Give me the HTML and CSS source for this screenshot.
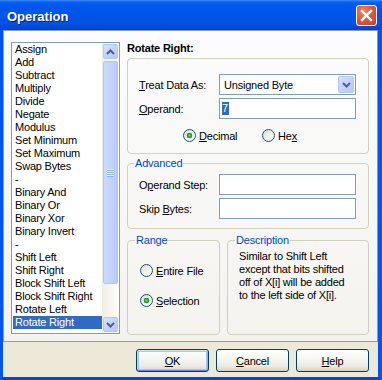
FILE: index.html
```html
<!DOCTYPE html>
<html>
<head>
<meta charset="utf-8">
<title>Operation</title>
<link rel="stylesheet" href="styles.css">
</head>
<body>
<div class="window">
  <div class="titlebar">
    <span class="title">Operation</span>
    <div class="close">
      <svg width="13" height="13" viewBox="0 0 13 13"><path d="M2 2 L11 11 M11 2 L2 11" stroke="#fff" stroke-width="2.4" stroke-linecap="square" fill="none"/></svg>
    </div>
  </div>
  <div class="frame">
    <div class="client">
      <div class="page">
        <div class="listbox">
          <ul class="items">
            <li>Assign</li>
            <li>Add</li>
            <li>Subtract</li>
            <li>Multiply</li>
            <li>Divide</li>
            <li>Negate</li>
            <li>Modulus</li>
            <li>Set Minimum</li>
            <li>Set Maximum</li>
            <li>Swap Bytes</li>
            <li>-</li>
            <li>Binary And</li>
            <li>Binary Or</li>
            <li>Binary Xor</li>
            <li>Binary Invert</li>
            <li>-</li>
            <li>Shift Left</li>
            <li>Shift Right</li>
            <li>Block Shift Left</li>
            <li>Block Shift Right</li>
            <li>Rotate Left</li>
            <li class="sel">Rotate Right</li>
          </ul>
          <div class="scrollbar">
            <div class="sb-btn"><div class="sb-face"><svg width="9" height="6" viewBox="0 0 9 6"><path d="M1 5 L4.5 1.5 L8 5" stroke="#4D6185" stroke-width="2" fill="none"/></svg></div></div>
            <div class="sb-track"><div class="thumb"><span class="grip"></span></div></div>
            <div class="sb-btn"><div class="sb-face"><svg width="9" height="6" viewBox="0 0 9 6"><path d="M1 1 L4.5 4.5 L8 1" stroke="#4D6185" stroke-width="2" fill="none"/></svg></div></div>
          </div>
        </div>
        <div class="right">
          <div class="heading">Rotate Right:</div>
          <div class="box">
            <div class="row">
              <span class="lbl"><u>T</u>reat Data As:</span>
              <div class="combo">
                <span class="combo-text">Unsigned Byte</span>
                <div class="combo-btn"><svg width="9" height="6" viewBox="0 0 9 6"><path d="M1 1 L4.5 4.5 L8 1" stroke="#4D6185" stroke-width="2" fill="none"/></svg></div>
              </div>
            </div>
            <div class="row">
              <span class="lbl"><u>O</u>perand:</span>
              <div class="field"><span class="hl">7</span></div>
            </div>
            <div class="radios">
              <div class="opt dec"><span class="radio on"></span><span><u>D</u>ecimal</span></div>
              <div class="opt"><span class="radio"></span><span>He<u>x</u></span></div>
            </div>
          </div>
          <fieldset class="group adv">
            <legend>Advanced</legend>
            <div class="row">
              <span class="lbl">O<u>p</u>erand Step:</span>
              <div class="field"></div>
            </div>
            <div class="row">
              <span class="lbl">Skip <u>B</u>ytes:</span>
              <div class="field"></div>
            </div>
          </fieldset>
          <div class="bottom-row">
            <fieldset class="group range">
              <legend>Range</legend>
              <div class="opt"><span class="radio"></span><span><u>E</u>ntire File</span></div>
              <div class="opt second"><span class="radio on"></span><span><u>S</u>election</span></div>
            </fieldset>
            <fieldset class="group desc">
              <legend>Description</legend>
              <p class="desc-text">Similar to Shift Left<br>except that bits shifted<br>off of X[i] will be added<br>to the left side of X[i].</p>
            </fieldset>
          </div>
        </div>
      </div>
      <div class="buttons">
        <div class="btn default"><span><u>O</u>K</span></div>
        <div class="btn"><span><u>C</u>ancel</span></div>
        <div class="btn"><span><u>H</u>elp</span></div>
      </div>
    </div>
  </div>
</div>
</body>
</html>
```
FILE: styles.css
```css
* { box-sizing: border-box; }
html, body { margin: 0; padding: 0; }
body {
  width: 382px;
  height: 380px;
  overflow: hidden;
  background: #0055EA;
  font-family: "Liberation Sans", Arial, sans-serif;
  font-size: 11px;
  letter-spacing: -0.2px;
  color: #000;
}
u { text-decoration: underline; text-underline-offset: 1px; }

.window {
  width: 382px;
  height: 380px;
  display: flex;
  flex-direction: column;
}

.titlebar {
  height: 30px;
  flex: none;
  display: flex;
  align-items: center;
  justify-content: space-between;
  padding: 0 5px 0 7px;
  background: linear-gradient(#3D8BF8 0, #0A61F1 2px, #0058EE 5px, #0055E8 15px, #0052E2 24px, #0048D8 28px, #003FCC 30px);
}
.title {
  color: #fff;
  font: bold 13px "Liberation Sans", Arial, sans-serif;
  line-height: 15px;
  margin-top: 3px;
  letter-spacing: 0;
  text-shadow: 1px 1px 0 #0A1E8C;
}
.close {
  width: 21px;
  height: 21px;
  border: 1px solid #fff;
  border-radius: 3px;
  background: radial-gradient(circle at 35% 30%, #F08868 0, #E2583A 45%, #C8401F 100%);
  display: flex;
  align-items: center;
  justify-content: center;
}

.frame {
  flex: 1;
  display: flex;
  border-style: solid;
  border-color: #0055EA;
  border-width: 0 4px 3px 3px;
  border-bottom-color: #0046D8;
}
.client {
  flex: 1;
  display: flex;
  flex-direction: column;
  background: #ECE9D8;
}

.page {
  height: 312px;
  flex: none;
  border: 1px solid #919B9C;
  background: linear-gradient(#FCFCFE, #F4F3EE);
  display: flex;
  gap: 7px;
  padding: 11px 8px 6px 7px;
}

.listbox {
  width: 109px;
  height: 292px;
  border: 1px solid #7F9DB9;
  background: #fff;
  display: flex;
}
.items {
  flex: 1;
  list-style: none;
  margin: 0;
  padding: 0 0 0 1px;
}
.items li {
  height: 13px;
  line-height: 13px;
  padding-left: 2px;
  white-space: nowrap;
}
.items li.sel {
  background: #316AC5;
  color: #fff;
}

.scrollbar {
  width: 17px;
  display: flex;
  flex-direction: column;
  background: linear-gradient(to right, #EEEDE5, #FEFEFB);
}
.sb-btn {
  height: 17px;
  flex: none;
  padding: 1px;
}
.sb-face, .combo-btn {
  height: 100%;
  border: 1px solid #B4C8F6;
  border-radius: 2px;
  background: linear-gradient(135deg, #D6E3FE 0%, #C2D3FC 50%, #B6C9F6 100%);
  display: flex;
  align-items: center;
  justify-content: center;
}
.sb-track {
  flex: 1;
  padding: 1px 1px 0;
}
.thumb {
  height: 223px;
  border: 1px solid #B2C6F2;
  border-radius: 2px;
  background: linear-gradient(to right, #CADAFE 0%, #C2D4FD 50%, #B8CBF7 100%);
  display: flex;
  align-items: center;
  justify-content: center;
}
.grip {
  width: 7px;
  height: 8px;
  background: repeating-linear-gradient(#EEF4FE 0 1px, #8CB0F8 1px 2px);
}

.right {
  width: 242px;
  display: flex;
  flex-direction: column;
}
.heading {
  font-weight: bold;
  height: 13px;
  line-height: 13px;
}

.box {
  margin-top: 3px;
  border: 1px solid #D0D0BF;
  border-radius: 4px;
  padding: 15px 12px 11px 11px;
}
.row {
  display: flex;
  align-items: center;
  height: 21px;
}
.row + .row { margin-top: 3px; }
.lbl {
  width: 80px;
  flex: none;
  white-space: nowrap;
}
.combo, .field {
  width: 137px;
  height: 21px;
  border: 1px solid #7F9DB9;
  background: #fff;
  display: flex;
  align-items: center;
}
.combo {
  justify-content: space-between;
  padding: 1px;
}
.combo-text { padding-left: 3px; }
.combo-btn {
  width: 16px;
  flex: none;
}
.field { padding-left: 2px; }
.hl {
  background: #316AC5;
  color: #fff;
  line-height: 13px;
  padding: 0 1px 0 0;
}

.radios {
  display: flex;
  height: 13px;
  margin-top: 10px;
  padding-left: 44px;
}
.opt {
  display: flex;
  align-items: center;
  gap: 3px;
  height: 13px;
  white-space: nowrap;
}
.opt.dec { width: 79px; }
.radio {
  width: 13px;
  height: 13px;
  flex: none;
  border: 1px solid #1C5180;
  border-radius: 50%;
  background: linear-gradient(135deg, #DCDCD4 0%, #F2F2EE 55%, #FFFFFF 100%);
}
.radio.on {
  background: radial-gradient(circle at 50% 50%, #6EDB6E 0, #2BAA2B 1.6px, #1F9A1F 2.6px, transparent 3.1px),
              linear-gradient(135deg, #DCDCD4 0%, #F2F2EE 55%, #FFFFFF 100%);
}

.group {
  margin: 0;
  min-width: 0;
  border: 1px solid #D0D0BF;
  border-radius: 4px;
}
.group legend {
  padding: 0 1px;
  margin-left: -5px;
  color: #0046D5;
  line-height: 13px;
  font-size: 11px;
}
.adv {
  margin-top: 3px;
  padding: 4px 12px 9px 11px;
}
.bottom-row {
  flex: 1;
  display: flex;
  gap: 7px;
  margin-top: 5px;
}
.range {
  width: 93px;
  padding: 17px 4px 0 12px;
}
.range legend { margin-left: -5px; }
.range .opt.second { margin-top: 17px; }
.desc {
  width: 142px;
  padding: 3px 4px 0 11px;
}
.desc legend { margin-left: -4px; }
.desc-text {
  margin: 0;
  line-height: 13px;
  white-space: nowrap;
}

.buttons {
  display: flex;
  justify-content: flex-end;
  gap: 7px;
  padding: 7px 9px 0 0;
}
.btn {
  width: 73px;
  height: 23px;
  border: 1px solid #003C74;
  border-radius: 3px;
  background: linear-gradient(#FFFFFF 0%, #F7F6F2 40%, #ECEBE5 75%, #DEDBD0 92%, #D6D0C5 100%);
  display: flex;
  align-items: center;
  justify-content: center;
}
.btn.default {
  box-shadow: inset 0 1px 0 #CEE7FF, inset 0 -1px 0 #6982EE, inset 1px 0 0 #B8D3FC, inset -1px 0 0 #8CAEF0, inset 0 0 0 2px #A8C7F7;
}
```
